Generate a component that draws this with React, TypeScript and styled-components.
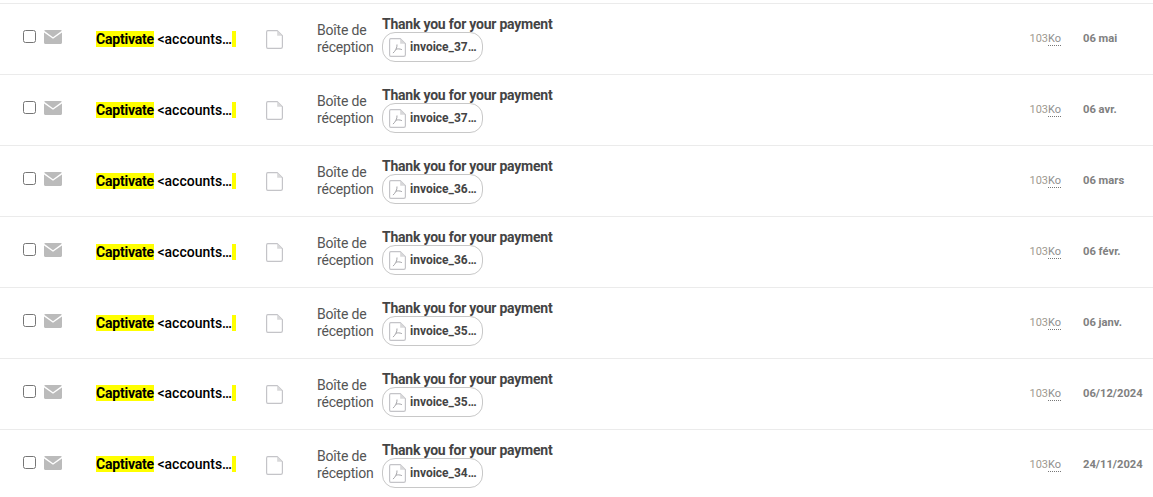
import React from "react"
import styled, { createGlobalStyle } from "styled-components"

const mails = [
  { file: "invoice_37…", date: "06 mai" },
  { file: "invoice_37…", date: "06 avr." },
  { file: "invoice_36…", date: "06 mars" },
  { file: "invoice_36…", date: "06 févr." },
  { file: "invoice_35…", date: "06 janv." },
  { file: "invoice_35…", date: "06/12/2024" },
  { file: "invoice_34…", date: "24/11/2024" },
]

const App = (): JSX.Element => {
  return (
    <MailList>
      <GlobalStyle />
      {mails.map((mail, i) => (
        <MailRow key={i}>
          <SelectCell>
            <Check type="checkbox" />
            <EnvelopeIcon />
          </SelectCell>
          <Sender $lifted={i >= 5}>
            <Mark>Captivate</Mark> &lt;accounts…<MarkEnd />
          </Sender>
          <NoteCell>
            <PageIcon />
          </NoteCell>
          <Folder>Boîte de réception</Folder>
          <SubjectCell>
            <Subject>Thank you for your payment</Subject>
            <Attachment>
              <PdfIcon />
              <FileName>{mail.file}</FileName>
            </Attachment>
          </SubjectCell>
          <Size>
            103<Unit>Ko</Unit>
          </Size>
          <DateText>{mail.date}</DateText>
        </MailRow>
      ))}
    </MailList>
  )
}

const EnvelopeIcon = () => (
  <svg width="18" height="14" viewBox="0 0 19 14" preserveAspectRatio="none">
    <path d="M1.5 0h16c.6 0 1.1.3 1.3.8L9.5 7.2.2.8C.4.3.9 0 1.5 0z" fill="#bbb" />
    <path d="M0 2.4l9.5 6.4L19 2.4v10.1c0 .8-.7 1.5-1.5 1.5h-16C.7 14 0 13.3 0 12.5z" fill="#bbb" />
  </svg>
)

const PageIcon = () => (
  <svg width="17" height="19" viewBox="0 0 17 19">
    <path
      d="M1.8.6h9.4l5.2 5.2v10.9c0 .9-.7 1.6-1.6 1.6H1.8c-.7 0-1.2-.7-1.2-1.6V2.2C.6 1.3 1.1.6 1.8.6z"
      fill="#fff"
      stroke="#c4c4c8"
      strokeWidth="1.2"
    />
    <path d="M11.2.6v5.2h5.2z" fill="#d8d8da" />
  </svg>
)

const PdfIcon = () => (
  <svg width="17" height="19" viewBox="0 0 17 19">
    <path
      d="M1.8.6h9.4l5.2 5.2v10.9c0 .9-.7 1.6-1.6 1.6H1.8c-.7 0-1.2-.7-1.2-1.6V2.2C.6 1.3 1.1.6 1.8.6z"
      fill="#fff"
      stroke="#c4c4c8"
      strokeWidth="1.2"
    />
    <path d="M11.2.6v5.2h5.2z" fill="#d8d8da" />
    <path d="M8 6.5c.3 3-1.6 6.5-4 8.6M6.9 11.2c1.8-.5 3.6-.5 6 .4" fill="none" stroke="#a5a5a9" strokeWidth="1" />
  </svg>
)

const GlobalStyle = createGlobalStyle`
  html, body {
    margin: 0;
    height: 100%;
    overflow: hidden;
    background: #fff;
    font-family: Roboto, "Liberation Sans", sans-serif;
  }
`

const MailList = styled.div`
  padding-top: 3px;
`

const MailRow = styled.div`
  display: grid;
  grid-template-columns: 96px 170px 51px 65px 647.5px 53.5px 1fr;
  align-items: center;
  height: 70px;
  border-top: 1px solid #ebebeb;
`

const SelectCell = styled.div`
  display: flex;
  align-items: flex-start;
  gap: 8px;
  padding: 0 0 4px 23px;
`

const Check = styled.input`
  width: 13px;
  height: 13px;
  margin: 0;
`

const Sender = styled.div<{ $lifted: boolean }>`
  font-size: 14px;
  font-weight: 500;
  line-height: 16px;
  color: #000;
  white-space: nowrap;
  padding-bottom: ${props => (props.$lifted ? "3px" : "1px")};
`

const Mark = styled.span`
  background: #ffff00;
  font-weight: 700;
  letter-spacing: -0.2px;
`

const MarkEnd = styled.span`
  display: inline-block;
  width: 4px;
  height: 16px;
  background: #ffff00;
  vertical-align: top;
`

const NoteCell = styled.div`
  display: flex;
`

const Folder = styled.div`
  width: 60px;
  font-size: 14px;
  letter-spacing: -0.2px;
  line-height: 17px;
  color: #555;
`

const SubjectCell = styled.div`
  display: flex;
  flex-direction: column;
  align-items: flex-start;
`

const Subject = styled.div`
  font-size: 14px;
  font-weight: 700;
  letter-spacing: -0.23px;
  line-height: 16px;
  color: #444;
`

const Attachment = styled.div`
  display: flex;
  align-items: center;
  gap: 4px;
  box-sizing: border-box;
  width: 101px;
  height: 30px;
  padding-left: 6px;
  border: 1px solid #c8c8c8;
  border-radius: 13px;
`

const FileName = styled.span`
  font-size: 12px;
  font-weight: 700;
  color: #444;
  white-space: nowrap;
`

const Size = styled.div`
  font-size: 11px;
  color: #a09a90;
  padding-bottom: 2px;
`

const Unit = styled.span`
  color: #8f8f8f;
  border-bottom: 1px dotted #777;
`

const DateText = styled.div`
  font-size: 11.2px;
  font-weight: 700;
  color: #808080;
  white-space: nowrap;
  padding-bottom: 2px;
`

export default App
